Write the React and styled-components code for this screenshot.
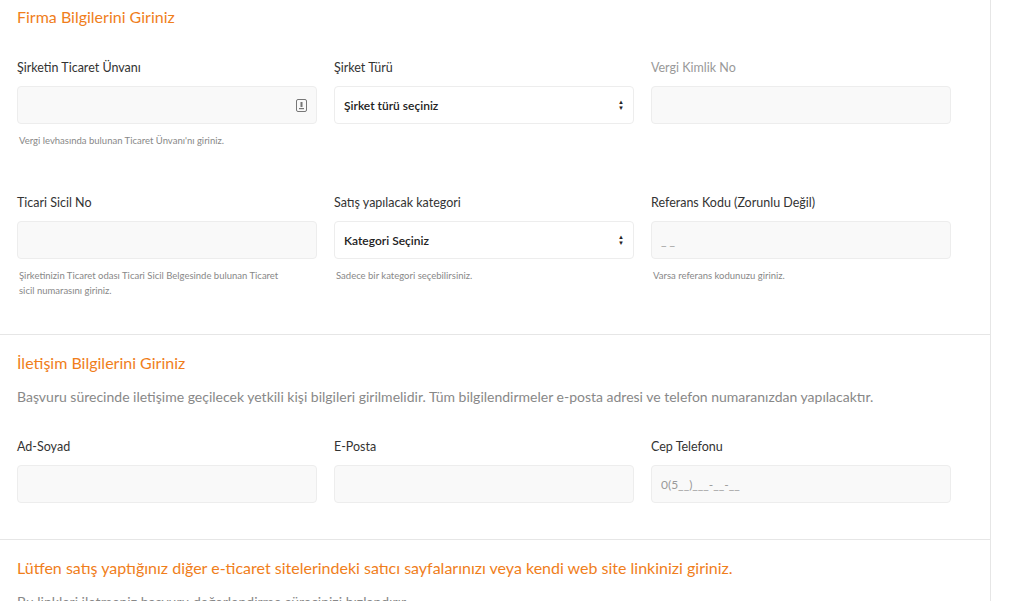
import React from 'react';
import styled, { createGlobalStyle } from 'styled-components';

const Global = createGlobalStyle`
  body { margin: 0; background: #fff; font-family: Lato, "Open Sans", sans-serif; color: #333; }
`;

const Page = styled.div` width: 990px; border-right: 1px solid #e6e6e6; min-height: 601px; `;
const Section = styled.section` padding: ${p => p.$top}px 0 ${p => p.$bottom}px 17px; border-bottom: ${p => p.$last ? 'none' : '1px solid #e6e6e6'}; `;
const Title = styled.h2` margin: 0; font-size: 16px; font-weight: 400; color: #f07e1b; line-height: 20px; `;
const Desc = styled.p` margin: 14px 0 0; font-size: 14px; color: #888; line-height: 20px; `;
const Grid = styled.div` display: grid; grid-template-columns: repeat(3, 300px); column-gap: 17px; row-gap: ${p => p.$rowGap || 0}px; margin-top: ${p => p.$mt}px; `;
const Field = styled.div` display: flex; flex-direction: column; `;
const Label = styled.label` font-size: 12.5px; line-height: 16px; margin-bottom: 10px; color: ${p => p.$muted ? '#999' : '#333'}; `;
const InputBox = styled.div` position: relative; height: 38px; box-sizing: border-box; border: 1px solid #ededed; border-radius: 4px; background: ${p => p.$white ? '#fff' : '#f9f9f9'}; display: flex; align-items: center; padding: 0 9px; font-size: 12px; color: ${p => p.$dark ? '#222' : '#999'}; font-weight: ${p => p.$dark ? 600 : 400}; justify-content: space-between; `;
const Help = styled.div` font-size: 9.5px; color: #888; line-height: 15px; margin-top: 9px; padding-left: 2px; width: 262px; `;
const Arrows = styled.span` display: flex; flex-direction: column; align-items: center; font-size: 6px; line-height: 6px; color: #222; `;

const Select = ({ text }) => (
  <InputBox $white $dark>{text}<Arrows><span>▲</span><span>▼</span></Arrows></InputBox>
);

const CardIcon = () => (
  <svg width="11" height="13" viewBox="0 0 11 13"><rect x="0.5" y="0.5" width="10" height="12" rx="1.5" fill="none" stroke="#777"/><rect x="4.5" y="3" width="2" height="5" fill="#777"/><rect x="3" y="9" width="5" height="1.2" fill="#777"/></svg>
);

export default function App() {
  return (
    <Page>
      <Global />
      <Section $top={7} $bottom={36}>
        <Title>Firma Bilgilerini Giriniz</Title>
        <Grid $mt={33} $rowGap={47}>
          <Field><Label>Şirketin Ticaret Ünvanı</Label><InputBox><span /><CardIcon /></InputBox><Help>Vergi levhasında bulunan Ticaret Ünvanı'nı giriniz.</Help></Field>
          <Field><Label>Şirket Türü</Label><Select text="Şirket türü seçiniz" /></Field>
          <Field><Label $muted>Vergi Kimlik No</Label><InputBox /></Field>
          <Field><Label>Ticari Sicil No</Label><InputBox /><Help>Şirketinizin Ticaret odası Ticari Sicil Belgesinde bulunan Ticaret sicil numarasını giriniz.</Help></Field>
          <Field><Label>Satış yapılacak kategori</Label><Select text="Kategori Seçiniz" /><Help>Sadece bir kategori seçebilirsiniz.</Help></Field>
          <Field><Label>Referans Kodu (Zorunlu Değil)</Label><InputBox>_ _</InputBox><Help>Varsa referans kodunuzu giriniz.</Help></Field>
        </Grid>
      </Section>
      <Section $top={18} $bottom={36}>
        <Title>İletişim Bilgilerini Giriniz</Title>
        <Desc>Başvuru sürecinde iletişime geçilecek yetkili kişi bilgileri girilmelidir. Tüm bilgilendirmeler e-posta adresi ve telefon numaranızdan yapılacaktır.</Desc>
        <Grid $mt={32}>
          <Field><Label>Ad-Soyad</Label><InputBox /></Field>
          <Field><Label>E-Posta</Label><InputBox /></Field>
          <Field><Label>Cep Telefonu</Label><InputBox>0(5__)___-__-__</InputBox></Field>
        </Grid>
      </Section>
      <Section $top={18} $bottom={0} $last>
        <Title>Lütfen satış yaptığınız diğer e-ticaret sitelerindeki satıcı sayfalarınızı veya kendi web site linkinizi giriniz.</Title>
        <Desc>Bu linkleri iletmeniz başvuru değerlendirme sürecinizi hızlandırır.</Desc>
      </Section>
    </Page>
  );
}
